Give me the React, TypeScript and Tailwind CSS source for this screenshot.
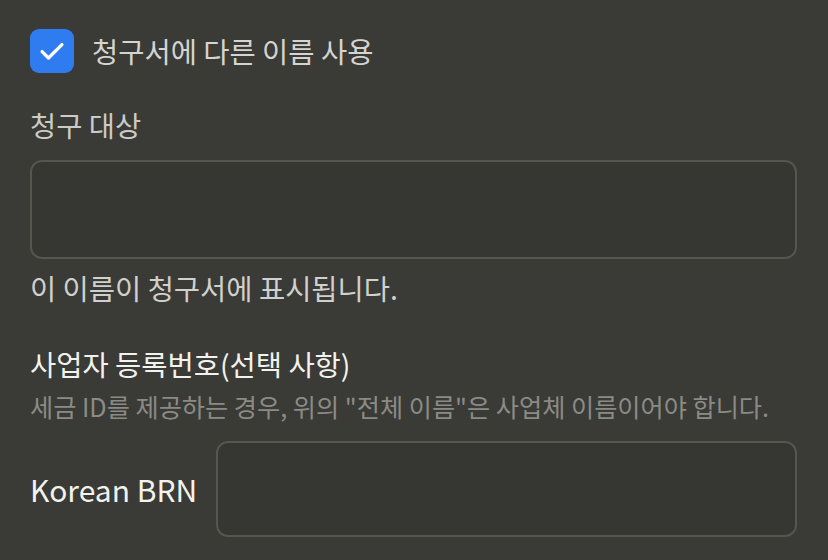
import React from 'react';

const font = "font-['Noto_Sans_CJK_KR','Noto_Sans',sans-serif]";

export default function App() {
  return (
    <div className={`w-[828px] h-[560px] overflow-hidden bg-[#3a3a36] px-[30px] pt-[29px] ${font}`}>
      <label className="flex items-center gap-[18px]">
        <span className="flex h-[44px] w-[44px] items-center justify-center rounded-[9px] bg-[#2f7cf0]">
          <svg width="28" height="28" viewBox="0 0 24 24" fill="none" stroke="white" strokeWidth="2.8" strokeLinecap="round" strokeLinejoin="round">
            <path d="M3.5 12.5l5.5 5.5L20.5 6.5" />
          </svg>
        </span>
        <span className="text-[28.5px] leading-none text-[#d4d4d0]">청구서에 다른 이름 사용</span>
      </label>

      <div className="mt-[38px] text-[28.5px] leading-none text-[#cbcbc7]">청구 대상</div>
      <div className="mt-[20px] h-[99px] rounded-[12px] border-2 border-[#56564f] bg-[#363632] mr-[1px]" />
      <div className="mt-[15px] text-[28.5px] leading-none text-[#d0d0cc]">이 이름이 청구서에 표시됩니다.</div>

      <div className="mt-[48px] text-[28.5px] leading-none text-[#f2f2ee]">사업자 등록번호(선택 사항)</div>
      <div className="mt-[15px] text-[25.2px] leading-none text-[#8b8b86]">
        세금 ID를 제공하는 경우, 위의 "전체 이름"은 사업체 이름이어야 합니다.
      </div>

      <div className="mt-[22px] flex items-center">
        <div className="w-[186px] text-[30px] leading-none text-[#f2f2ee]">Korean BRN</div>
        <div className="h-[96px] flex-1 rounded-[12px] border-2 border-[#56564f] bg-[#363632] mr-[1px]" />
      </div>
    </div>
  );
}
